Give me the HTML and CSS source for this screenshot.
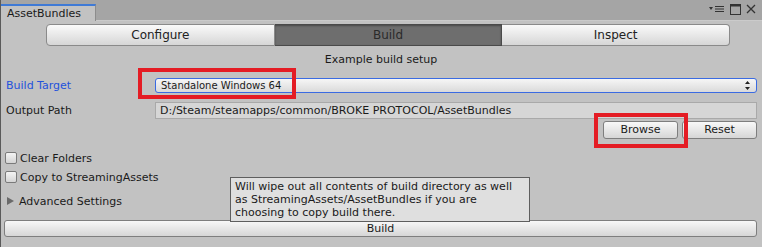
FILE: index.html
```html
<!DOCTYPE html>
<html lang="en">

<head>
    <meta charset="UTF-8">
    <title>AssetBundles</title>
    <link rel="stylesheet" href="styles.css">
</head>

<body>
    <div class="window">
        <div class="tabbar">
            <div class="tab">AssetBundles</div>
            <div class="tab-icons">
                <svg width="16" height="8" viewBox="0 0 16 8">
                    <path d="M0 2 L4 2 L2 5 Z" fill="#333" />
                    <rect x="6" y="1" width="9" height="1" fill="#333" />
                    <rect x="6" y="3.5" width="9" height="1" fill="#333" />
                    <rect x="6" y="6" width="9" height="1" fill="#333" />
                </svg>
                <svg width="11" height="11" viewBox="0 0 11 11">
                    <rect x="0.5" y="0.5" width="10" height="10" fill="none" stroke="#333" />
                    <rect x="0.5" y="0.5" width="10" height="2" fill="#333" />
                </svg>
                <svg width="10" height="10" viewBox="0 0 10 10">
                    <path d="M1 1 L9 9 M9 1 L1 9" stroke="#333" stroke-width="1.3" />
                </svg>
            </div>
        </div>

        <div class="content">
            <div class="toolbar">
                <div class="tool">Configure</div>
                <div class="tool selected">Build</div>
                <div class="tool">Inspect</div>
            </div>

            <div class="caption">Example build setup</div>

            <div class="field-row">
                <label class="blue">Build Target</label>
                <div class="dropdown">
                    <span>Standalone Windows 64</span>
                    <svg width="5" height="9" viewBox="0 0 5 9">
                        <path d="M2.5 0 L5 3 L0 3 Z M0 6 L5 6 L2.5 9 Z" fill="#222" />
                    </svg>
                </div>
            </div>

            <div class="field-row path-row">
                <label>Output Path</label>
                <div class="textfield">D:/Steam/steamapps/common/BROKE PROTOCOL/AssetBundles</div>
            </div>

            <div class="button-row">
                <div class="btn small">Browse</div>
                <div class="btn small">Reset</div>
            </div>

            <div class="check-row first">
                <span class="checkbox"></span>
                <span>Clear Folders</span>
            </div>
            <div class="check-row">
                <span class="checkbox"></span>
                <span>Copy to StreamingAssets</span>
            </div>

            <div class="foldout">
                <span class="arrow"></span>
                <span>Advanced Settings</span>
            </div>

            <div class="btn build">Build</div>
        </div>

        <div class="tooltip">Will wipe out all contents of build directory as well<br>as StreamingAssets/AssetBundles if you are<br>choosing to copy build there.</div>

        <div class="mark mark-target"></div>
        <div class="mark mark-browse"></div>
    </div>
</body>

</html>
```

FILE: styles.css
```css
body {
    margin: 0;
    font-family: "DejaVu Sans", Verdana, sans-serif;
    font-size: 11px;
    color: #1a1a1a;
}

.window {
    position: relative;
    width: 762px;
    height: 247px;
    background-color: #c2c2c2;
    border-left: 1px solid #5a5a5a;
    box-sizing: border-box;
    overflow: hidden;
}

.tabbar {
    height: 21px;
    background-color: #a5a5a5;
    display: flex;
    align-items: flex-end;
    justify-content: space-between;
    border-bottom: 1px solid #cbcbcb;
    box-sizing: border-box;
}

.tab {
    width: 95px;
    height: 17px;
    background-color: #c2c2c2;
    border-top: 2px solid #3f7ad6;
    border-right: 1px solid #8c8c8c;
    padding-left: 6px;
    box-sizing: border-box;
    line-height: 15px;
    margin-bottom: -1px;
}

.tab-icons {
    display: flex;
    align-items: center;
    gap: 5px;
    height: 20px;
    padding-right: 6px;
    margin-bottom: 1px;
}

.content {
    padding: 3px 5px 0 4px;
}

.toolbar {
    display: flex;
    margin-left: 41px;
    width: 684px;
    height: 22px;
}

.tool {
    flex: 1;
    text-align: center;
    font-size: 12px;
    line-height: 20px;
    color: #222;
    background: linear-gradient(#fafafa, #d6d6d6);
    border: 1px solid #8a8a8a;
    border-left: none;
}

.tool:first-child {
    border-left: 1px solid #8a8a8a;
    border-radius: 4px 0 0 4px;
}

.tool:last-child {
    border-radius: 0 4px 4px 0;
}

.tool.selected {
    background: #6e6e6e;
    box-shadow: inset 0 1px 2px rgba(0, 0, 0, 0.35);
    border-color: #4a4a4a;
    color: #2a2a2a;
}

.caption {
    margin-top: 6px;
    height: 16px;
    line-height: 16px;
    text-align: center;
}

.field-row {
    display: flex;
    align-items: center;
    margin-top: 10px;
}

.field-row label {
    width: 149px;
    padding-left: 1px;
    flex-shrink: 0;
}

.blue {
    color: #2452dc;
}

.dropdown {
    flex: 1;
    height: 15px;
    display: flex;
    align-items: center;
    justify-content: space-between;
    padding: 0 6px 0 5px;
    font-size: 10px;
    border: 1px solid #3b6be2;
    border-radius: 3px;
    background: linear-gradient(#f6f6f6, #dadada);
    box-sizing: border-box;
}

.path-row {
    margin-top: 9px;
}

.textfield {
    flex: 1;
    height: 17px;
    line-height: 15px;
    padding-left: 4px;
    background-color: #d6d6d6;
    border: 1px solid #a9a9a9;
    box-sizing: border-box;
}

.button-row {
    display: flex;
    justify-content: flex-end;
    gap: 4px;
    margin-top: 2px;
}

.btn {
    text-align: center;
    background: linear-gradient(#f8f8f8, #d6d6d6);
    border: 1px solid #7e7e7e;
    border-radius: 3px;
    box-sizing: border-box;
}

.btn.small {
    width: 75px;
    height: 18px;
    line-height: 16px;
}

.check-row {
    display: flex;
    align-items: center;
    gap: 3px;
    height: 18px;
}

.check-row.first {
    margin-top: 10px;
}

.check-row + .check-row {
    margin-top: 1px;
}

.checkbox {
    width: 12px;
    height: 12px;
    border: 1px solid #7a7a7a;
    border-radius: 2px;
    background: linear-gradient(#f4f4f4, #d4d4d4);
    box-sizing: border-box;
}

.foldout {
    display: flex;
    align-items: center;
    gap: 5px;
    height: 18px;
    margin-top: 6px;
    padding-left: 2px;
}

.arrow {
    width: 0;
    height: 0;
    border-left: 7px solid #6a6a6a;
    border-top: 4px solid transparent;
    border-bottom: 4px solid transparent;
}

.btn.build {
    margin-top: 10px;
    margin-left: -1px;
    height: 17px;
    line-height: 15px;
}

.tooltip {
    position: absolute;
    left: 229px;
    top: 177px;
    width: 300px;
    height: 45px;
    padding: 2px 4px;
    line-height: 13px;
    white-space: nowrap;
    background-color: #dfdfdf;
    border: 1px solid #5e5e5e;
    box-sizing: border-box;
}

.mark {
    position: absolute;
    border: 4px solid #e41c24;
    box-sizing: border-box;
}

.mark-target {
    left: 137px;
    top: 68px;
    width: 158px;
    height: 31px;
}

.mark-browse {
    left: 593px;
    top: 113px;
    width: 94px;
    height: 35px;
}
```
